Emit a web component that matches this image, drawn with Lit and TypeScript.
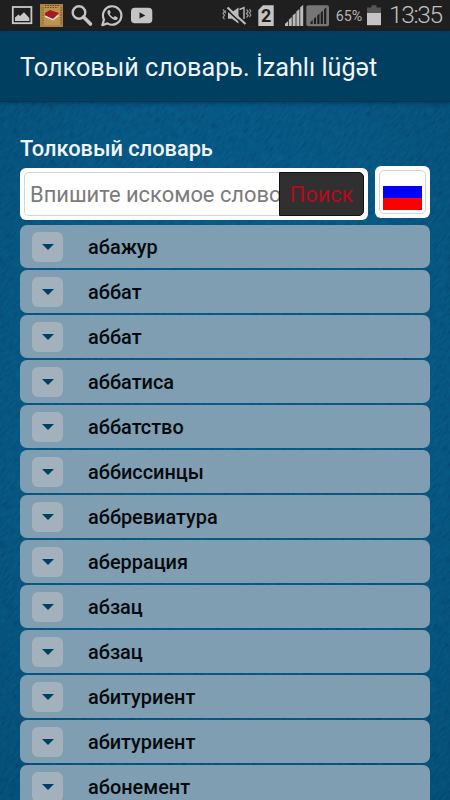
import { LitElement, html, svg, css } from "lit";
import { customElement, property } from "lit/decorators.js";

const WORDS = [
  "абажур", "аббат", "аббат", "аббатиса", "аббатство", "аббиссинцы",
  "аббревиатура", "аберрация", "абзац", "абзац", "абитуриент",
  "абитуриент", "абонемент",
];

@customElement("status-bar")
class StatusBar extends LitElement {
  static styles = css`
    :host { display: block; height: 31px; background: #1f1f1f; }
    svg { display: block; }
    text { font-family: Roboto, sans-serif; }
    .pct { font-size: 14.5px; fill: #b4b4b4; }
    .clock { font-size: 24.5px; fill: #c0c0c0; font-weight: 300; }
    .sim { font-size: 18px; fill: #1f1f1f; font-weight: 700; }
  `;
  render() {
    return html`<svg width="450" height="31" viewBox="0 0 450 31">
      <rect x="12.8" y="7" width="18.6" height="16.2" fill="none" stroke="#c8c8c8" stroke-width="1.8"/>
      <path d="M15 21V17.5L18.5 14.5L20 16L24 12.2L29.3 18V21Z" fill="#c8c8c8"/>
      <rect x="40" y="4" width="23" height="23" fill="#aa8242"/>
      <rect x="42" y="6" width="19" height="19" fill="#bd944f"/>
      <path d="M43 7V25M61 7V25M45 5.5H59M45 7.5H58" stroke="#6d4d22" stroke-width="1" stroke-dasharray="1.5 1"/>
      <path d="M45 13L50 10L59 13L53 19L45 15.500Z" fill="#a91920"/>
      <path d="M45 15.500L53 19L58.500 14.500V16.500L53 20.500L45 17Z" fill="#eee3d1"/>
      <circle cx="79" cy="12.500" r="6.300" fill="none" stroke="#c4c4c4" stroke-width="2.400"/>
      <path d="M83.500 17L90.500 24" stroke="#c4c4c4" stroke-width="3.600" stroke-linecap="round"/>
      <path d="M102.300 25.100L104 19.700A9.200 9.200 0 1 1 107.500 23.400Z" fill="none" stroke="#c4c4c4" stroke-width="2.200" stroke-linejoin="round"/>
      <path d="M108.200 10.200C107 11.300 107 13.300 109 15.800C111.400 18.800 114.200 20.500 116.200 19.900C117.600 19.400 118 18.200 117.600 17.400L114.900 16.100L113.600 17.500C111.700 16.800 110.400 15.400 109.700 14L110.700 12.600L109.600 9.900Z" fill="#c4c4c4"/>
      <rect x="131" y="7.800" width="21.300" height="15.400" rx="3.800" fill="#c4c4c4"/>
      <path d="M139.500 12.300V18.500L145.300 15.400Z" fill="#1f1f1f"/>

      <path d="M228 12.300H232L238.500 7.500V23.500L232 18.800H228Z" fill="#bcbcbc"/>
      <path d="M227 10L244 25.500" stroke="#1f1f1f" stroke-width="1.600"/>
      <path d="M227.500 7.500L245.500 24" stroke="#bcbcbc" stroke-width="2.200"/>
      <path d="M239.500 9.500L244 7.500V19" fill="none" stroke="#bcbcbc" stroke-width="1.400"/>
      <path d="M223 9.500l1.500 1.800-1.500 2 1.500 2-1.500 2 1.500 2M226 10.500l-1 1.500 1 1.500M246.500 9.500l1.700 2-1.700 2 1.700 2-1.700 2M249.500 9l1.300 2-1.300 2 1.300 2-1.300 2" stroke="#999" stroke-width="1.200" fill="none"/>
      <path d="M258.300 10L263 5.300H273.700V26H258.300Z" fill="#c4c4c4"/>
      <text class="sim" x="260.900" y="22.300">2</text>
      ${[0, 1, 2, 3, 4].map((i) => svg`<path d="M${285 + i * 3.8} 26V${23.8 - i * 4.1}L${288 + i * 3.8} ${21.2 - i * 4.1}V26Z" fill="#bcbcbc"/>`)}
      <rect x="306.300" y="5.300" width="22.700" height="21" rx="2" fill="#767676"/>
      ${[0, 1, 2, 3, 4].map((i) => svg`<path d="M${310.500 + i * 3.4} 24V${22 - i * 3.2}L${312.700 + i * 3.4} ${20 - i * 3.2}V24Z" fill="#1f1f1f"/>`)}
      <text class="pct" x="335.800" y="21" textLength="26.500" lengthAdjust="spacingAndGlyphs">65%</text>
      <path d="M371.500 5.300H376.500V7.500H381V13H367V7.500H371.500Z" fill="#555"/>
      <rect x="367" y="13" width="14" height="12.200" fill="#c4c4c4"/>
      <text class="clock" x="389" y="23.300" textLength="54">13:35</text>
    </svg>`;
  }
}

@customElement("word-row")
class WordRow extends LitElement {
  @property() word = "";
  static styles = css`
    :host {
      box-sizing: border-box; height: 43px; flex: none; display: flex; align-items: center;
      padding-left: 12px; gap: 25px; border-radius: 7px; background: #7f9eb1;
      color: #050a0e; font-size: 19.9px; font-weight: 500;
    }
    .toggle {
      width: 31px; height: 30px; border-radius: 6px; background: #a2b1bc;
      display: flex; align-items: center; justify-content: center;
    }
    .arrow { display: block; width: 12px; height: 6px; margin-top: 1px; }
    .word { line-height: 28px; padding-top: 3px; }
  `;
  render() {
    return html`
      <span class="toggle"><svg class="arrow" viewBox="0 0 12 6"><path d="M0 0H12L6 6Z" fill="#004064"/></svg></span>
      <span class="word">${this.word}</span>`;
  }
}

@customElement("app-root")
class AppRoot extends LitElement {
  static styles = css`
    :host {
      display: flex; flex-direction: column; position: relative; height: 800px; width: 450px;
      overflow: hidden; font-family: Roboto, sans-serif; isolation: isolate;
      background: radial-gradient(ellipse 330px 520px at 50% 50%, #095386, #084f7b 60%, #06466f);
    }
    .cloth { position: absolute; inset: 0; z-index: -1; opacity: 0.12; }
    .header {
      height: 71px; flex: none; box-sizing: border-box; padding: 3px 20px 0; display: flex; align-items: center;
      background: #003f60; color: #f2f5f7; font-size: 25.2px; white-space: nowrap;
      border-bottom: 1px solid #00344f; box-shadow: 0 1px 4px rgba(0, 25, 45, 0.45);
    }
    .main { padding: 32px 20px 0; }
    .label { color: #f2f5f7; font-size: 21.8px; line-height: 30px; font-weight: 500; margin-bottom: 2px; }
    .search { display: flex; gap: 7px; height: 54px; }
    .box {
      box-sizing: border-box; width: 348px; height: 52px; margin-top: 2px; padding: 4px;
      background: #fff; border-radius: 6px; display: flex;
    }
    .input {
      flex: 1; min-width: 0; overflow: hidden; box-sizing: border-box; border: 1px solid #d4d4d4;
      border-right: 0; border-radius: 5px 0 0 5px; padding-left: 5px;
      color: #7b7b7b; font-size: 21.9px; line-height: 44px; white-space: nowrap;
    }
    .button {
      width: 85px; box-sizing: border-box; border: 1px solid #111; border-radius: 0 5px 5px 0;
      background: #303030; color: #b9081b; font-size: 21.8px; line-height: 43px; text-align: center;
    }
    .flag {
      box-sizing: border-box; width: 55px; height: 52px; padding: 4px; background: #fff; border-radius: 6px;
    }
    .frame {
      box-sizing: border-box; height: 44px; border: 1px solid #d4d4d4; border-radius: 5px; padding: 15px 3px 0 2.5px;
    }
    .blue { height: 12px; background: #0000fa; }
    .red { height: 12px; background: #fa0000; }
    .list { display: flex; flex-direction: column; gap: 2px; margin-top: 5.4px; }
  `;
  render() {
    return html`
      <svg class="cloth" width="450" height="800">
        <filter id="grain" x="0" y="0" width="100%" height="100%">
          <feTurbulence type="fractalNoise" baseFrequency="0.12 0.45" numOctaves="2" seed="4"/>
          <feColorMatrix values="0 0 0 0 0  0.9 0 0 0 -0.15  1.2 0 0 0 -0.1  0 0 0 0 1"/>
        </filter>
        <g transform="rotate(-50 225 400)"><rect x="-300" y="-100" width="1050" height="1000" filter="url(#grain)"/></g>
      </svg>
      <status-bar></status-bar>
      <div class="header"><span class="title">Толковый словарь. İzahlı lüğət</span></div>
      <div class="main">
        <div class="label">Толковый словарь</div>
        <div class="search">
          <div class="box">
            <div class="input">Впишите искомое слово</div>
            <div class="button">Поиск</div>
          </div>
          <div class="flag"><div class="frame"><div class="blue"></div><div class="red"></div></div></div>
        </div>
        <div class="list">${WORDS.map((w) => html`<word-row .word=${w}></word-row>`)}</div>
      </div>`;
  }
}
